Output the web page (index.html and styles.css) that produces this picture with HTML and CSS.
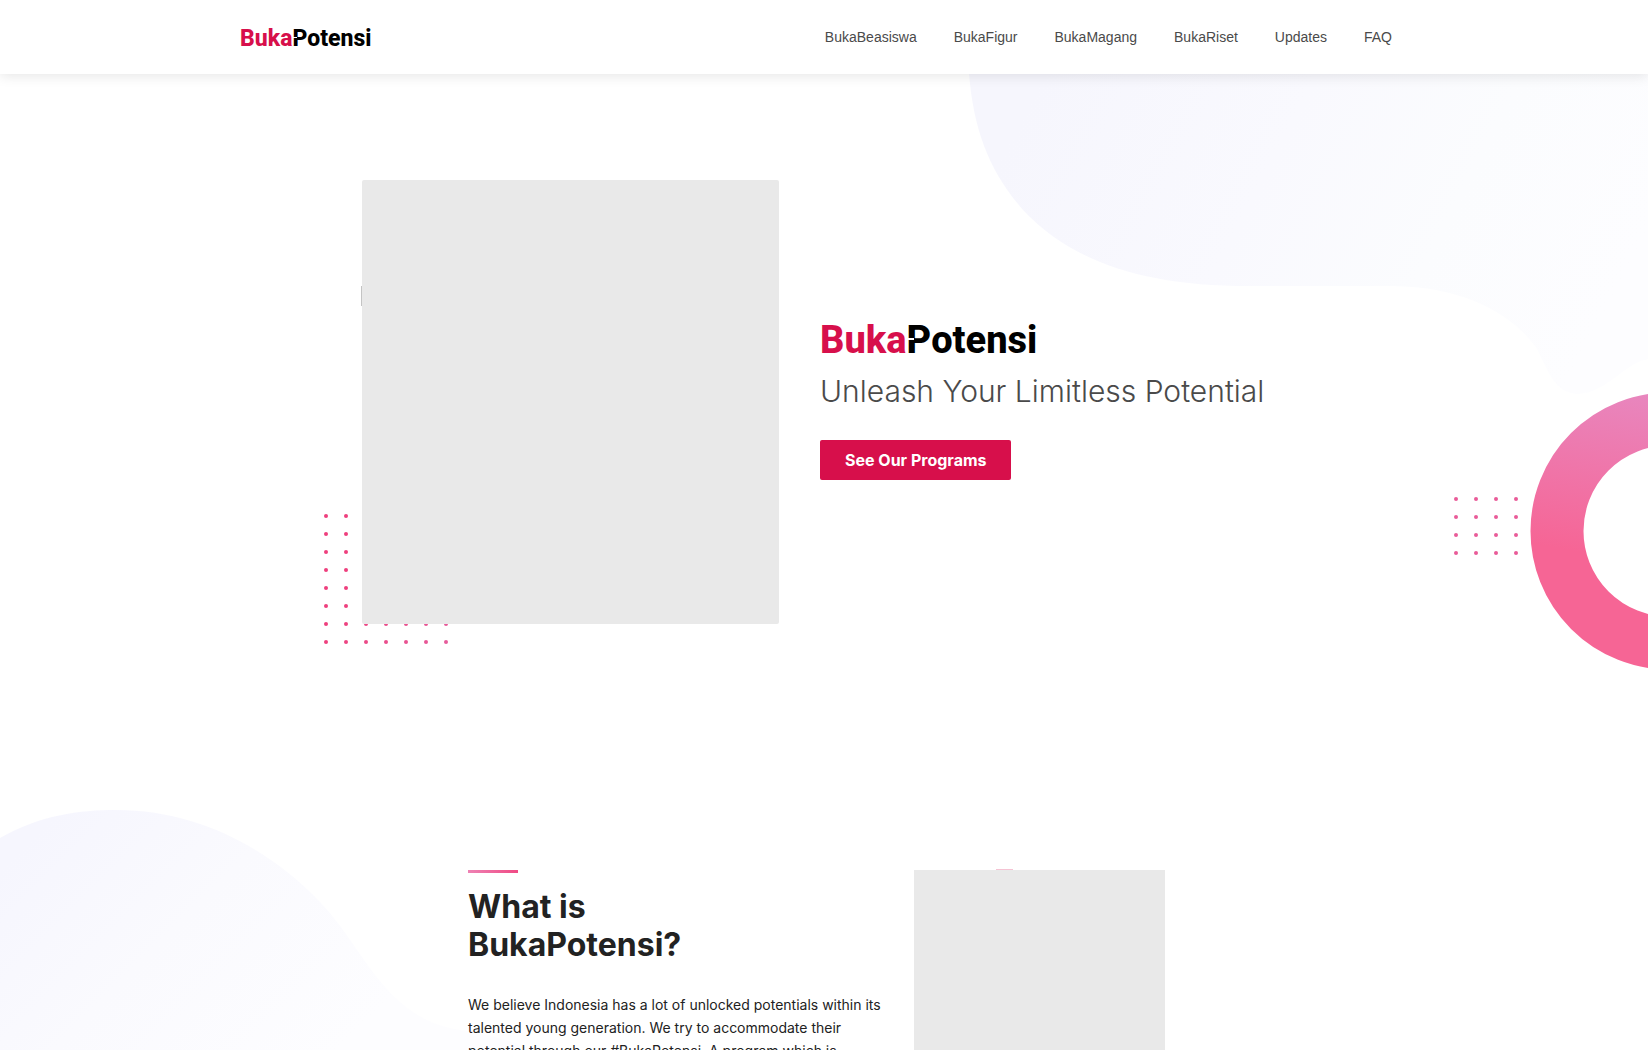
FILE: index.html
```html
<!DOCTYPE html>
<html lang="en">
<head>
<meta charset="utf-8">
<meta name="viewport" content="width=device-width, initial-scale=1">
<title>BukaPotensi</title>
<link rel="stylesheet" href="styles.css">
</head>
<body>
<header class="site-header">
  <div class="header-inner">
    <a class="wordmark wordmark-small" href="#"><span class="brand">Buka</span><span class="notched">P</span>otensi</a>
    <nav class="nav">
      <a href="#">BukaBeasiswa</a>
      <a href="#">BukaFigur</a>
      <a href="#">BukaMagang</a>
      <a href="#">BukaRiset</a>
      <a href="#">Updates</a>
      <a href="#">FAQ</a>
    </nav>
  </div>
</header>
<main>
  <section class="hero">
    <svg class="hero-blob" viewBox="0 0 680 330" aria-hidden="true">
      <defs>
        <linearGradient id="blobA" gradientUnits="userSpaceOnUse" x1="60" y1="30" x2="600" y2="310">
          <stop offset="0" stop-color="#f6f6fd"/>
          <stop offset="0.4" stop-color="#f9f9fe"/>
          <stop offset="0.7" stop-color="#fbfcfe"/>
          <stop offset="1" stop-color="#fdfdff"/>
        </linearGradient>
      </defs>
      <path fill="url(#blobA)" d="M1 0C6 58 22 98 55 136C106 190 180 212 280 212H425C500 213 546 242 569 275C582 300 586 318 610 320C640 318 655 290 680 285V0Z"/>
    </svg>
    <svg class="hero-ring" viewBox="0 0 200 280" aria-hidden="true">
      <defs>
        <linearGradient id="ring" gradientUnits="userSpaceOnUse" x1="200" y1="0" x2="150" y2="280">
          <stop offset="0" stop-color="#e887bf"/>
          <stop offset="0.6" stop-color="#f66595"/>
          <stop offset="1" stop-color="#f66595"/>
        </linearGradient>
        <pattern id="dotsR" y="9" width="20" height="18" patternUnits="userSpaceOnUse">
          <circle cx="8" cy="9" r="2" fill="#e95b98"/>
        </pattern>
      </defs>
      <rect y="99" width="80" height="72" fill="url(#dotsR)"/>
      <circle cx="221" cy="140" r="112" fill="none" stroke="url(#ring)" stroke-width="53"/>
    </svg>
    <div class="hero-inner">
      <div class="hero-figure">
        <svg class="hero-dots" viewBox="0 0 140 144" aria-hidden="true">
          <defs>
            <linearGradient id="dotInk" gradientUnits="userSpaceOnUse" x1="40" y1="80" x2="140" y2="144">
              <stop offset="0" stop-color="#ee3f7d"/>
              <stop offset="1" stop-color="#e55f9f"/>
            </linearGradient>
            <pattern id="dotCells" width="20" height="18" patternUnits="userSpaceOnUse">
              <circle cx="10" cy="9" r="2" fill="#fff"/>
            </pattern>
            <mask id="dotMask"><rect width="140" height="144" fill="url(#dotCells)"/></mask>
          </defs>
          <rect width="140" height="144" fill="url(#dotInk)" mask="url(#dotMask)"/>
        </svg>
        <div class="hero-image"></div>
      </div>
      <div class="hero-copy">
        <h1 class="wordmark wordmark-large"><span class="brand">Buka</span><span class="notched">P</span>otensi</h1>
        <p class="tagline">Unleash Your Limitless Potential</p>
        <button class="cta" type="button">See Our Programs</button>
      </div>
    </div>
  </section>
  <section class="about">
    <svg class="about-blob" viewBox="0 0 560 260" aria-hidden="true">
      <defs>
        <linearGradient id="blobB" gradientUnits="userSpaceOnUse" x1="40" y1="20" x2="300" y2="280">
          <stop offset="0" stop-color="#f6f6fe"/>
          <stop offset="0.45" stop-color="#fafafe"/>
          <stop offset="1" stop-color="#fdfdff"/>
        </linearGradient>
      </defs>
      <path fill="url(#blobB)" d="M0 28C40 5 80 0 116 0C200 0 270 40 320 92C366 140 384 208 460 220C510 228 540 240 560 260H0Z"/>
    </svg>
    <div class="about-inner">
      <div class="about-copy">
        <h2 class="about-title">What is<br>BukaPotensi?</h2>
        <p class="about-text">We believe Indonesia has a lot of unlocked potentials within its talented young generation. We try to accommodate their potential through our #BukaPotensi. A program which is</p>
      </div>
      <div class="about-image"></div>
    </div>
  </section>
</main>
</body>
</html>
```
FILE: styles.css
```css
* {
  box-sizing: border-box;
}

body {
  margin: 0;
  overflow-x: hidden;
  background: #fff;
  color: #222;
  font-family: Inter, "Liberation Sans", sans-serif;
}

h1, h2, p {
  margin: 0;
}

.site-header {
  position: relative;
  z-index: 2;
  background: #fff;
  box-shadow: 0 2px 12px rgba(0, 0, 0, 0.1);
}

.header-inner {
  display: flex;
  align-items: center;
  justify-content: space-between;
  max-width: 1168px;
  height: 74px;
  margin: 0 auto;
  padding-right: 16px;
}

.nav {
  display: flex;
  gap: 37px;
}

.nav a {
  color: #4a4a4a;
  font-family: "Liberation Sans", Arial, sans-serif;
  font-size: 14px;
  line-height: 20px;
  text-decoration: none;
}

.wordmark {
  color: #000;
  font-family: Roboto, "Liberation Sans", sans-serif;
  font-weight: 800;
  text-decoration: none;
}

.wordmark-small {
  padding-top: 3px;
  font-size: 23px;
  line-height: 28px;
}

.wordmark-large {
  font-size: 38px;
  line-height: 44px;
}

.brand {
  color: #d70f4b;
}

.notched {
  position: relative;
}

/* the slit in the stem of the logo's P */
.notched::after {
  content: "";
  position: absolute;
  left: 0;
  top: 45%;
  width: 30%;
  height: 6%;
  background: #fff;
}

.hero {
  position: relative;
  padding: 106px 24px 186px;
}

.hero-blob {
  position: absolute;
  top: 0;
  right: 0;
  width: 680px;
}

.hero-ring {
  position: absolute;
  top: 317px;
  right: 0;
  width: 200px;
}

.hero-inner {
  position: relative;
  display: flex;
  align-items: center;
  gap: 41px;
  max-width: 924px;
  margin: 0 auto;
}

.hero-figure {
  position: relative;
  flex: 0 0 417px;
}

/* edge of the picture's round backdrop */
.hero-figure::before {
  content: "";
  position: absolute;
  left: -1px;
  top: 106px;
  width: 2px;
  height: 20px;
  background: #c4c4c4;
}

.hero-dots {
  position: absolute;
  left: -46px;
  bottom: -27px;
  width: 140px;
}

.hero-image {
  position: relative;
  height: 444px;
  border-radius: 2px;
  background: #e9e9e9;
}

.hero-copy {
  flex: 1;
  padding-bottom: 6px;
}

.tagline {
  margin-top: 8px;
  color: #4a4a4a;
  font-size: 30px;
  font-weight: 300;
  line-height: 42px;
  white-space: nowrap;
}

.cta {
  height: 40px;
  margin-top: 28px;
  padding: 0 25px;
  border: 0;
  border-radius: 2px;
  background: #d70f4b;
  color: #fff;
  font-family: inherit;
  font-size: 16px;
  font-weight: 700;
}

.about {
  position: relative;
  padding: 60px 24px 0;
}

.about-blob {
  position: absolute;
  top: 0;
  left: 0;
  width: 560px;
}

.about-inner {
  position: relative;
  display: flex;
  justify-content: space-between;
  max-width: 712px;
  margin: 0 auto;
  padding-right: 15px;
}

.about-copy {
  flex: 0 0 424px;
}

.about-copy::before {
  content: "";
  display: block;
  width: 50px;
  height: 3px;
  background: linear-gradient(90deg, #ee82b4, #f04a84);
}

.about-title {
  margin-top: 15px;
  font-size: 32px;
  font-weight: 700;
  line-height: 38px;
}

.about-text {
  margin-top: 29px;
  font-size: 14px;
  line-height: 23px;
}

.about-image {
  position: relative;
  flex: 0 0 251px;
  height: 252px;
  background: #e9e9e9;
}

.about-image::before {
  content: "";
  position: absolute;
  left: 82px;
  top: -1px;
  width: 17px;
  height: 1px;
  background: #f5c3d3;
}
```
